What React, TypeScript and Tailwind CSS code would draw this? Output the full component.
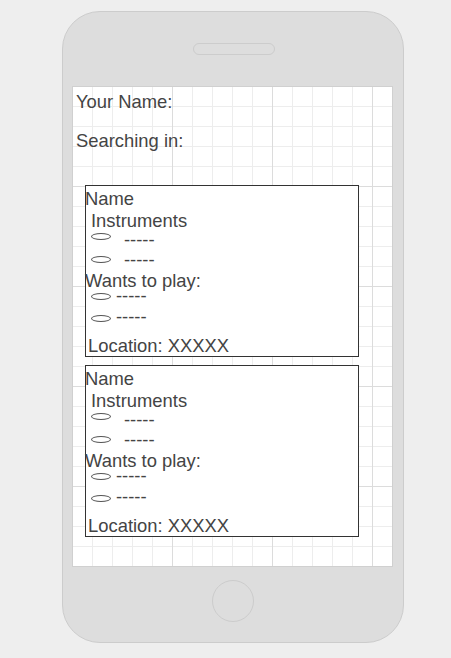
const font = { fontFamily: '"Liberation Sans", Arial, sans-serif' };

type DashRow = { h: string; ellipseTop: string; gap: string };

const instrumentRows: DashRow[] = [
  { h: "h-[20px]", ellipseTop: "mt-[3px]", gap: "ml-[13px]" },
  { h: "h-[21px]", ellipseTop: "mt-[6px]", gap: "ml-[13px]" },
];

const wantRows: DashRow[] = [
  { h: "h-[21px]", ellipseTop: "mt-[7px]", gap: "ml-[5px]" },
  { h: "h-[29px]", ellipseTop: "mt-[8px]", gap: "ml-[5px]" },
];

function Row({ row }: { row: DashRow }) {
  return (
    <div className={`flex items-start pl-[5px] ${row.h}`}>
      <span className={`block h-[7px] w-[20px] shrink-0 rounded-[50%] border border-[#555] ${row.ellipseTop}`} />
      <span className={row.gap}>-----</span>
    </div>
  );
}

function Card({ className = "" }: { className?: string }) {
  return (
    <div className={`ml-[12px] h-[172px] w-[274px] border border-[#333] pt-[3px] text-[18.4px] leading-[20px] text-[#444] ${className}`}>
      <div className="-ml-px h-[22px]">Name</div>
      <div className="ml-[5px] h-[19px]">Instruments</div>
      {instrumentRows.map((r, i) => (
        <Row key={i} row={r} />
      ))}
      <div className="-ml-px h-[15px] whitespace-nowrap">Wants to play:</div>
      {wantRows.map((r, i) => (
        <Row key={i} row={r} />
      ))}
      <div className="ml-[2px] h-[20px]">Location: XXXXX</div>
    </div>
  );
}

export default function App() {
  return (
    <div className="h-[658px] w-[451px] bg-[#eeeeee] pl-[62px] pt-[11px]" style={font}>
      <div className="flex h-[632px] w-[342px] flex-col rounded-[38px] border border-[#cccccc] bg-[#dddddd]">
        <div className="ml-[130px] mt-[31px] h-[12px] w-[82px] rounded-full border border-[#cccccc]" />
        <div className="ml-[9px] mt-[31px] h-[481px] w-[321px] border border-[#d0d0d0] bg-white bg-origin-border bg-[linear-gradient(to_right,#dcdcdc_1px,transparent_1px),linear-gradient(to_bottom,#dcdcdc_1px,transparent_1px),linear-gradient(to_right,#ededed_1px,transparent_1px),linear-gradient(to_bottom,#ededed_1px,transparent_1px)] bg-[size:100px_100px,100px_100px,20px_20px,20px_20px]">
          <div className="pl-[3px] pt-[5px] text-[18.4px] leading-[20px] text-[#444]">
            <div>Your Name:</div>
            <div className="mt-[19px]">Searching in:</div>
          </div>
          <Card className="mt-[34px] bg-white" />
          <Card className="mt-[8px] bg-white" />
        </div>
        <div className="ml-[149px] mt-[13px] h-[42px] w-[42px] rounded-full border border-[#cccccc]" />
      </div>
    </div>
  );
}
